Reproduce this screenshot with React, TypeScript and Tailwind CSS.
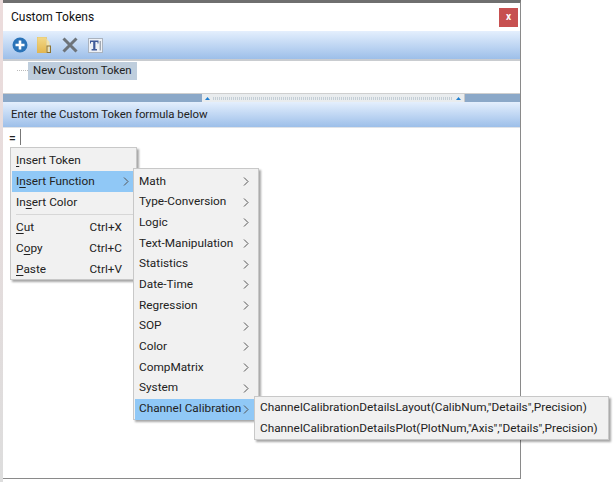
import React from "react";

const font = "font-['Roboto','Open_Sans',sans-serif]";

function Chevron({ color = "#555" }: { color?: string }) {
  return (
    <svg width="6" height="9" viewBox="0 0 6 9" className="shrink-0">
      <path d="M1 0.5 L5 4.5 L1 8.5" fill="none" stroke={color} strokeWidth="1" />
    </svg>
  );
}

function U({ children }: { children: React.ReactNode }) {
  return <span className="underline underline-offset-2">{children}</span>;
}

const subItems = [
  "Math",
  "Type-Conversion",
  "Logic",
  "Text-Manipulation",
  "Statistics",
  "Date-Time",
  "Regression",
  "SOP",
  "Color",
  "CompMatrix",
  "System",
];

function Menu1() {
  return (
    <div className="absolute left-[10px] top-[147px] w-[127px] h-[133px] bg-[#f1f1f1] border border-[#c8c8c8] shadow-[2px_2px_2px_rgba(0,0,0,0.35)] pt-[2px] px-px text-[11.8px] leading-[20.7px] text-[#222]">
      <div className="h-[20.7px] pl-[4px]"><U>I</U>nsert Token</div>
      <div className="h-[21px] pl-[4px] pr-[6px] bg-[#90c8f6] flex items-center justify-between">
        <span>I<U>n</U>sert Function</span>
        <Chevron />
      </div>
      <div className="h-[20.7px] pl-[4px]">In<U>s</U>ert Color</div>
      <div className="h-px bg-[#d7d7d7] ml-[4px] my-[2px]" />
      <div className="h-[20.7px] pl-[4px] pr-[13px] flex justify-between"><span><U>C</U>ut</span><span>Ctrl+X</span></div>
      <div className="h-[20.7px] pl-[4px] pr-[13px] flex justify-between"><span>C<U>o</U>py</span><span>Ctrl+C</span></div>
      <div className="h-[20.7px] pl-[4px] pr-[13px] flex justify-between"><span><U>P</U>aste</span><span>Ctrl+V</span></div>
    </div>
  );
}

function Menu2() {
  return (
    <div className="absolute left-[133px] top-[168px] w-[126px] h-[252px] bg-[#f1f1f1] border border-[#c8c8c8] shadow-[2px_2px_2px_rgba(0,0,0,0.35)] pt-[2px] px-px text-[11.8px] text-[#222]">
      {subItems.map((s) => (
        <div key={s} className="h-[20.7px] pl-[4px] pr-[8px] flex items-center justify-between whitespace-nowrap">
          <span>{s}</span>
          <Chevron />
        </div>
      ))}
      <div className="h-[21px] pl-[4px] pr-[8px] bg-[#90c8f6] flex items-center justify-between whitespace-nowrap">
        <span>Channel Calibration</span>
        <Chevron />
      </div>
    </div>
  );
}

function Menu3() {
  return (
    <div className="absolute left-[254px] top-[396px] w-[355px] h-[44px] bg-[#f1f1f1] border border-[#c8c8c8] shadow-[2px_2px_2px_rgba(0,0,0,0.35)] px-px text-[11.8px] text-[#222] whitespace-nowrap">
      <div className="h-[21px] pl-[4px] flex items-center">ChannelCalibrationDetailsLayout(CalibNum,"Details",Precision)</div>
      <div className="h-[21px] pl-[4px] flex items-center">ChannelCalibrationDetailsPlot(PlotNum,"Axis","Details",Precision)</div>
    </div>
  );
}

function Toolbar() {
  return (
    <div className="h-[30px] shrink-0 border-b-2 border-[#c9ccd0] bg-gradient-to-b from-[#e4effd] to-[#9dbfe9] flex items-center pl-[9px]">
      <svg width="16" height="16" viewBox="0 0 16 16">
        <circle cx="8" cy="8" r="7.5" fill="#2a73b8" />
        <path d="M8 3.5V12.5M3.5 8H12.5" stroke="#fff" strokeWidth="2.6" />
      </svg>
      <svg width="14" height="16" viewBox="0 0 14 16" className="ml-[9px]">
        <defs>
          <linearGradient id="fold" x1="0" y1="0" x2="0" y2="1">
            <stop offset="0" stopColor="#f2d98a" />
            <stop offset="1" stopColor="#e3b64e" />
          </linearGradient>
        </defs>
        <rect x="0" y="0" width="9.5" height="16" fill="url(#fold)" stroke="#d9b65a" strokeWidth="0.5" />
        <path d="M9.5 1.5 L12.5 5 V16 H9.5Z" fill="#f2e2ac" />
        <rect x="10" y="9" width="3.5" height="6.5" fill="none" stroke="#8f7430" strokeWidth="1" />
      </svg>
      <svg width="16" height="16" viewBox="0 0 16 16" className="ml-[11px]">
        <path d="M1.5 1.5 L14.5 14.5M14.5 1.5 L1.5 14.5" stroke="#6d7379" strokeWidth="3" />
      </svg>
      <svg width="15" height="15" viewBox="0 0 15 15" className="ml-[10px]">
        <rect x="0.5" y="0.5" width="14" height="14" fill="#eef1f6" stroke="#aab3bf" />
        <path d="M2 2.5H10.5V5.5H9.5V4H7.4V11H9V12.5H3.6V11H5.2V4H3V5.5H2Z" fill="#3f5a99" />
        <path d="M12.2 3V12.5" stroke="#7d8795" strokeWidth="1" />
      </svg>
    </div>
  );
}

function Splitter() {
  return (
    <div className="h-[9px] shrink-0 bg-[#8ba8c8] relative border-t border-[#cfcfcf]">
      <div className="absolute left-[199px] top-0 w-[263px] h-[8px] bg-[#e9ecee] border-r border-[#c8c8c8] flex items-center justify-between px-[3px]">
        <svg width="5" height="3" viewBox="0 0 5 3"><path d="M2.5 0L5 3H0Z" fill="#1f7fd0" /></svg>
        <div className="flex-1 h-[3px] mx-[3px] bg-[repeating-linear-gradient(90deg,#c3ced6_0,#c3ced6_1px,transparent_1px,transparent_2px)]" />
        <svg width="5" height="3" viewBox="0 0 5 3"><path d="M2.5 0L5 3H0Z" fill="#1f7fd0" /></svg>
      </div>
    </div>
  );
}

export default function App() {
  return (
    <div className={`relative w-[615px] h-[482px] bg-white overflow-hidden ${font} text-[11.4px] text-[#222]`}>
      <div className="absolute left-0 top-0 bottom-0 w-[3px] bg-gradient-to-b from-[#ecdcdc] to-[#dddddd]" />
      <div className="relative ml-[3px] w-[518px] h-[479px] bg-white border-t-[3px] border-t-[#6f6f6f] border-r border-r-[#8a8a8a] border-b border-b-[#8a8a8a] flex flex-col">
        <div className="h-[28px] shrink-0 flex items-center justify-between pl-[8px] pr-[2px]">
          <span className="text-[12px] text-[#111]">Custom Tokens</span>
          <div className="w-[19px] h-[19px] bg-[#c75050] flex items-center justify-center text-white text-[10px] font-bold leading-none">x</div>
        </div>
        <Toolbar />
        <div className="h-[32px] shrink-0 relative">
          <div className="absolute left-[14px] top-[9px] w-[11px] border-t border-dotted border-[#bbb]" />
          <div className="absolute left-[25px] top-[1px] h-[18px] px-[5px] bg-[#bfcedd] flex items-center">New Custom Token</div>
        </div>
        <Splitter />
        <div className="h-[26px] shrink-0 bg-gradient-to-b from-[#e4effd] to-[#9dbfe9] flex items-center pl-[8px] border-b border-[#dfe3e8]">
          Enter the Custom Token formula below
        </div>
        <div className="flex-1 pl-[6px] pt-[1px] flex items-start">
          <span className="font-semibold text-[12px] leading-[18px]">=</span>
          <span className="ml-[4px] w-px h-[16px] bg-[#777]" />
        </div>
      </div>
      <Menu1 />
      <Menu2 />
      <Menu3 />
    </div>
  );
}
